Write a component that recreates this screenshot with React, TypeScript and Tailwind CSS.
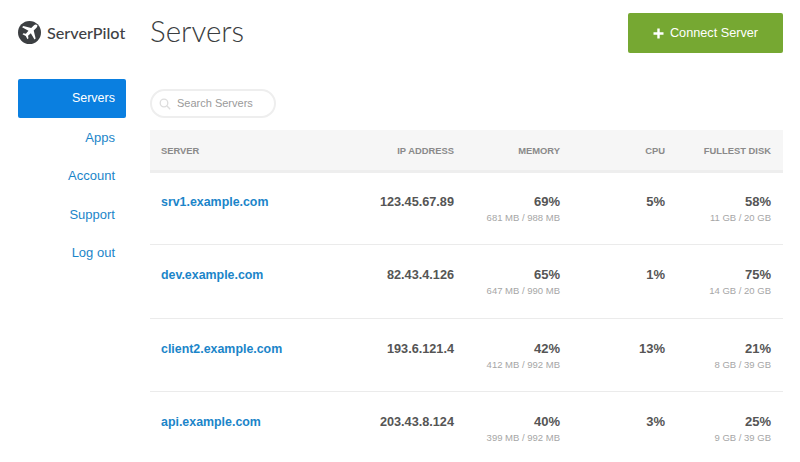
const navItems = ["Servers", "Apps", "Account", "Support", "Log out"]

const servers = [
  { name: "srv1.example.com", ip: "123.45.67.89", mem: "69%", memDetail: "681 MB / 988 MB", cpu: "5%", disk: "58%", diskDetail: "11 GB / 20 GB" },
  { name: "dev.example.com", ip: "82.43.4.126", mem: "65%", memDetail: "647 MB / 990 MB", cpu: "1%", disk: "75%", diskDetail: "14 GB / 20 GB" },
  { name: "client2.example.com", ip: "193.6.121.4", mem: "42%", memDetail: "412 MB / 992 MB", cpu: "13%", disk: "21%", diskDetail: "8 GB / 39 GB" },
  { name: "api.example.com", ip: "203.43.8.124", mem: "40%", memDetail: "399 MB / 992 MB", cpu: "3%", disk: "25%", diskDetail: "9 GB / 39 GB" },
]

function Logo() {
  return (
    <svg viewBox="0 0 24 24" className="w-[23px] h-[23px] shrink-0">
      <circle cx="12" cy="12" r="12" fill="#3c3f42" />
      <path
        d="M20 4.2c-.9-.9-2.4-.7-3.3.2l-2.9 2.9-8.3-2-1.2 1.2 6.6 3.8-2.7 2.9-2.5-.4-1 1 3.4 1.8 1.8 3.4 1-1-.4-2.5 2.9-2.7 3.8 6.6 1.2-1.2-2-8.3 2.9-2.9c.9-.9 1.1-2 .7-2.8z"
        fill="#ffffff"
      />
    </svg>
  )
}

export default function App() {
  return (
    <div className="w-[800px] h-[462px] overflow-hidden bg-white flex font-['Liberation_Sans',Arial,sans-serif] text-[#555]">
      <aside className="w-[150px] shrink-0 pl-[18px]">
        <div className="h-[79px] flex items-start pt-[21px] gap-[6px]">
          <Logo />
          <span className="font-['Lato',sans-serif] text-[16.2px] leading-[23px] font-medium text-[#3f4245]">ServerPilot</span>
        </div>
        <nav className="w-[108px] flex flex-col text-right">
          {navItems.map((item, i) => (
            <a
              key={item}
              href="#"
              className={
                i === 0
                  ? "h-[38.6px] text-[12.5px] leading-[38px] pr-[11px] rounded-[2px] bg-[#0a7fe0] text-white"
                  : "h-[38.6px] text-[13px] leading-[40px] pr-[11px] text-[#1b85c9]"
              }
            >
              {item}
            </a>
          ))}
        </nav>
      </aside>

      <main className="w-[633px] shrink-0">
        <div className="h-[89px] flex items-start justify-between">
          <h1 className="font-['Lato',sans-serif] font-light text-[29.5px] leading-[38px] mt-[12px] text-[#3a3d40]">Servers</h1>
          <button className="mt-[13px] w-[155px] h-[40px] rounded-[2px] bg-[#76a832] text-white text-[12.7px] flex items-center justify-center gap-[6px]">
            <svg viewBox="0 0 11 11" className="w-[11px] h-[11px]">
              <path d="M5.5 0.5v10M0.5 5.5h10" stroke="#fff" strokeWidth="2.4" />
            </svg>
            <span className="pt-[1px]">Connect Server</span>
          </button>
        </div>

        <div className="w-[126px] h-[29px] rounded-full border-2 border-[#eeeeee] flex items-center pl-[7px] gap-[6px] text-[11px] text-[#9a9a9a]">
          <svg viewBox="0 0 12 12" className="w-[12px] h-[12px] shrink-0" fill="none" stroke="#dddddd" strokeWidth="1.3">
            <circle cx="5" cy="5" r="3.8" />
            <path d="M8 8l3.2 3.2" />
          </svg>
          Search Servers
        </div>

        <table className="w-full mt-[12px] table-fixed border-collapse">
          <thead>
            <tr className="h-[41px] bg-[#f6f6f6] border-b-[3px] border-[#eeeeee] text-[9.4px] font-bold text-[#8a8a8a] text-right">
              <th className="w-[186px] pl-[11px] pt-[2px] text-left font-bold">SERVER</th>
              <th className="w-[118px] pt-[2px] font-bold">IP ADDRESS</th>
              <th className="w-[106px] pt-[2px] font-bold">MEMORY</th>
              <th className="w-[105px] pt-[2px] font-bold">CPU</th>
              <th className="w-[118px] pt-[2px] pr-[12px] font-bold">FULLEST DISK</th>
            </tr>
          </thead>
          <tbody>
            {servers.map((s, i) => {
              const top = i === 0 ? "pt-[21px]" : "pt-[22px]"
              return (
                <tr key={s.name} className="h-[73.5px] border-b border-[#ebebeb] last:border-b-0 align-top text-right">
                  <td className={`${top} pl-[11px] text-left text-[12.4px] leading-[16px] font-bold text-[#1b85c9] whitespace-nowrap`}>{s.name}</td>
                  <td className={`${top} text-[12.7px] leading-[16px] font-bold text-[#555]`}>{s.ip}</td>
                  <td className={top}>
                    <div className="text-[13px] leading-[16px] font-bold text-[#555]">{s.mem}</div>
                    <div className="text-[9.5px] leading-[12px] mt-[2px] text-[#a6a6a6]">{s.memDetail}</div>
                  </td>
                  <td className={`${top} text-[13px] leading-[16px] font-bold text-[#555]`}>{s.cpu}</td>
                  <td className={`${top} pr-[12px]`}>
                    <div className="text-[13px] leading-[16px] font-bold text-[#555]">{s.disk}</div>
                    <div className="text-[9.5px] leading-[12px] mt-[2px] text-[#a6a6a6]">{s.diskDetail}</div>
                  </td>
                </tr>
              )
            })}
          </tbody>
        </table>
      </main>
    </div>
  )
}
